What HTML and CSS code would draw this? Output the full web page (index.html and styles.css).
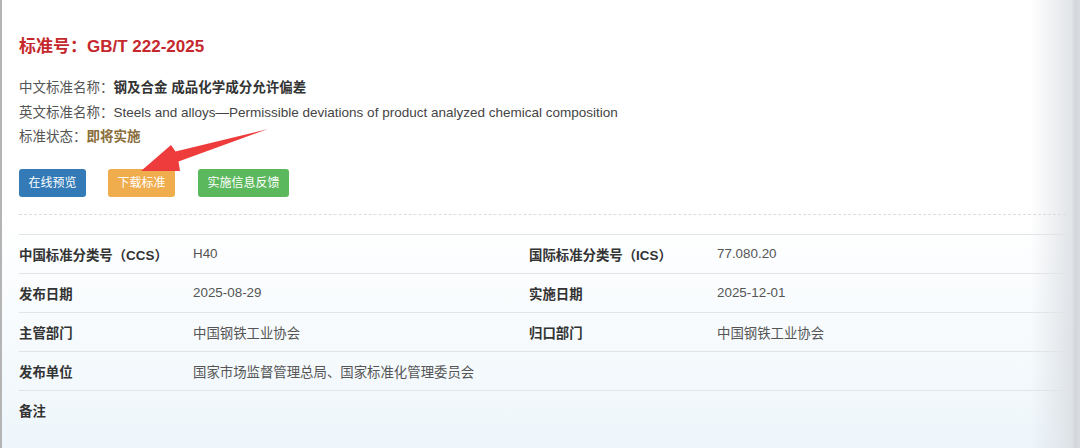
FILE: index.html
```html
<!DOCTYPE html>
<html lang="zh-CN">
<head>
<meta charset="utf-8">
<link rel="stylesheet" href="styles.css">
</head>
<body>
<div class="page">
  <h1 class="std-no">标准号：GB/T 222-2025</h1>
  <div class="info">
    <p><span class="lbl">中文标准名称：</span><b>钢及合金 成品化学成分允许偏差</b></p>
    <p><span class="lbl">英文标准名称：</span>Steels and alloys—Permissible deviations of product analyzed chemical composition</p>
    <p><span class="lbl">标准状态：</span><b class="status">即将实施</b></p>
  </div>
  <div class="btns">
    <span class="btn blue">在线预览</span>
    <span class="btn orange">下载标准</span>
    <span class="btn green">实施信息反馈</span>
  </div>
  <div class="dash"></div>
  <div class="table">
    <div class="row">
      <div class="k">中国标准分类号（CCS）</div><div class="v">H40</div>
      <div class="k">国际标准分类号（ICS）</div><div class="v">77.080.20</div>
    </div>
    <div class="row">
      <div class="k">发布日期</div><div class="v">2025-08-29</div>
      <div class="k">实施日期</div><div class="v">2025-12-01</div>
    </div>
    <div class="row">
      <div class="k">主管部门</div><div class="v">中国钢铁工业协会</div>
      <div class="k">归口部门</div><div class="v">中国钢铁工业协会</div>
    </div>
    <div class="row">
      <div class="k">发布单位</div><div class="v wide">国家市场监督管理总局、国家标准化管理委员会</div>
    </div>
    <div class="row last">
      <div class="k">备注</div><div class="v wide"></div>
    </div>
  </div>
  <svg class="arrow" width="140" height="60" viewBox="130 120 140 60">
    <polygon points="141,171 171,145 175.5,151.5 268,129 178.5,161.5 180,171" fill="#ee3b3b"/>
  </svg>
</div>
</body>
</html>
```
FILE: styles.css
```css
html, body { margin: 0; padding: 0; }
body {
  width: 1080px;
  height: 448px;
  overflow: hidden;
  font-family: "Liberation Sans", Arial, "Noto Sans CJK SC", sans-serif;
  background:
    linear-gradient(to right, rgba(220,224,228,0) 1030px, rgba(215,219,224,0.75) 1072px, #d3d7dc 1075px, #d9dde1 1080px),
    linear-gradient(to bottom, #ffffff 0, #ffffff 220px, #eef6fb 448px);
}
.page {
  position: relative;
  height: 448px;
  box-sizing: border-box;
  border-left: 2px solid #b4b4b4;
  padding: 36px 0 0 17px;
  width: 1066px;
}
.std-no {
  margin: 0;
  font-size: 17px;
  line-height: 22px;
  font-weight: bold;
  color: #c5282c;
}
.info { margin-top: 18px; }
.info p {
  margin: 0;
  font-size: 13.5px;
  line-height: 24.5px;
  color: #444;
}
.info .lbl { color: #555; }
.info b { color: #333; }
.info .status { color: #8a6d3b; }
.btns {
  display: flex;
  gap: 22px;
  margin-top: 19px;
}
.btn {
  display: inline-block;
  height: 28px;
  line-height: 28px;
  padding: 0 9.5px;
  font-size: 12px;
  color: #fff;
  border-radius: 3px;
}
.blue { background: #337ab7; }
.orange { background: #f0ad4e; }
.green { background: #5cb85c; margin-left: 1px; }
.dash {
  margin-top: 17px;
  border-top: 1px dashed #dcdcdc;
}
.table {
  margin-top: 19px;
  border-top: 1px solid #e2e4e6;
}
.row {
  display: grid;
  grid-template-columns: 174px 336px 188px 1fr;
  height: 38px;
  align-items: center;
  border-bottom: 1px solid #e2e4e6;
  font-size: 13.4px;
}
.row.last { border-bottom: none; }
.k { font-weight: bold; color: #333; }
.v { color: #555; }
.v.wide { grid-column: span 3; }
.arrow {
  position: absolute;
  left: 128px;
  top: 120px;
}
```
